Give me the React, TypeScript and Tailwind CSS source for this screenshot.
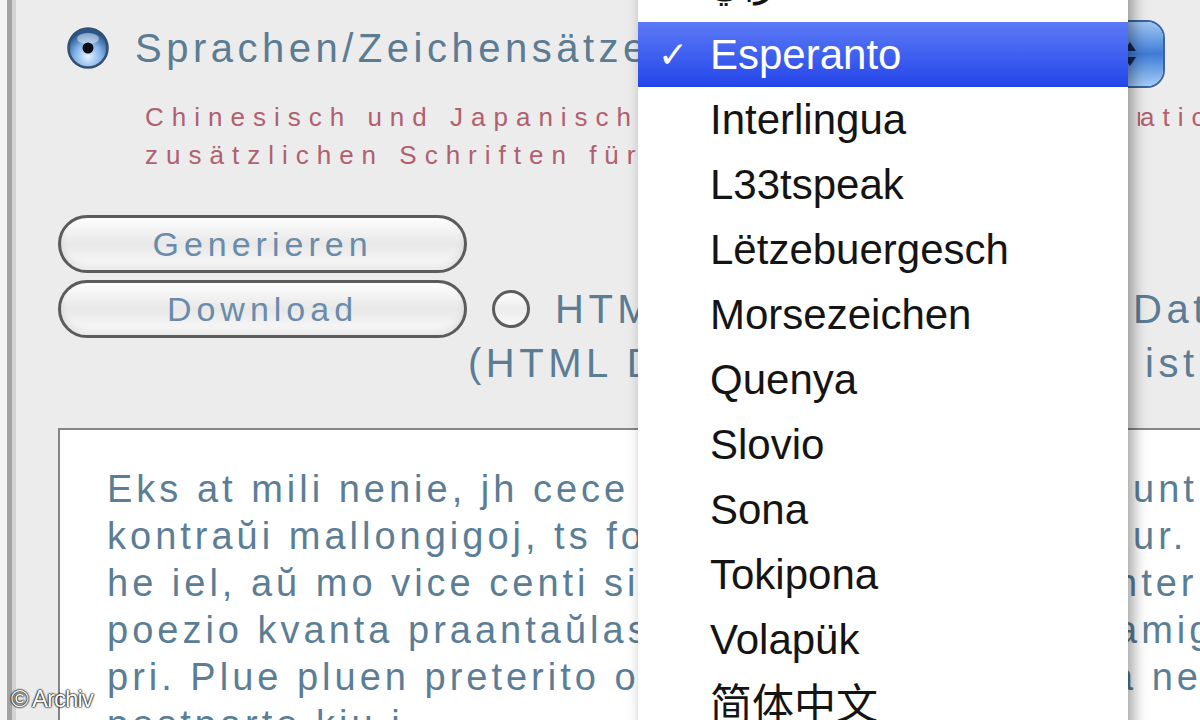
import React from 'react';

const bodyLines = [
  { left: 'Eks at mili nenie, jh cece tiel iom ol, ek', right: 'unt', w: 'w-[1026px]' },
  { left: 'kontraŭi mallongigoj, ts fo kvin mi pov', right: 'ur.', w: 'w-[1026px]' },
  { left: 'he iel, aŭ mo vice centi sia ek deka i', right: 'nter', w: 'w-[1009px]' },
  { left: 'poezio kvanta praantaŭlasta so, eh unu', right: 'amig', w: 'w-[1009px]' },
  { left: 'pri. Plue pluen preterito ol ki duo', right: 'a ne', w: 'w-[1005px]' },
  { left: 'postparto kiu i', right: '', w: 'w-[1026px]' },
];

const menuItems = [
  'عربي',
  'Esperanto',
  'Interlingua',
  'L33tspeak',
  'Lëtzebuergesch',
  'Morsezeichen',
  'Quenya',
  'Slovio',
  'Sona',
  'Tokipona',
  'Volapük',
  '简体中文',
];

function AquaRadio() {
  return (
    <svg width="44" height="44" viewBox="0 0 44 44">
      <defs>
        <radialGradient id="aq" cx="50%" cy="72%" r="62%">
          <stop offset="0" stopColor="#e2f1ff" />
          <stop offset="0.55" stopColor="#82b3ea" />
          <stop offset="1" stopColor="#2a5792" />
        </radialGradient>
      </defs>
      <circle cx="22" cy="22" r="19.5" fill="url(#aq)" stroke="#33506f" strokeWidth="2.5" />
      <ellipse cx="22" cy="12.5" rx="11" ry="5.5" fill="#ffffff" opacity="0.45" />
      <circle cx="22" cy="22" r="5.5" fill="#0d0d14" />
    </svg>
  );
}

function PlainRadio() {
  return (
    <svg width="40" height="40" viewBox="0 0 40 40">
      <defs>
        <linearGradient id="pr" x1="0" y1="0" x2="0" y2="1">
          <stop offset="0" stopColor="#ffffff" />
          <stop offset="0.5" stopColor="#ececec" />
          <stop offset="1" stopColor="#fafafa" />
        </linearGradient>
      </defs>
      <circle cx="20" cy="20" r="17.5" fill="url(#pr)" stroke="#5c5c5c" strokeWidth="3" />
    </svg>
  );
}

function PillButton({ label }: { label: string }) {
  return (
    <div className="flex h-[58px] w-[409px] shrink-0 items-center justify-center rounded-full border-[3px] border-[#5b5b5b] bg-gradient-to-b from-[#fdfdfd] via-[#e8e8e8] to-[#fbfbfb] text-[34px] leading-none tracking-[5px] text-[#6a8caa] shadow-[inset_0_-4px_6px_rgba(0,0,0,0.08)]">
      {label}
    </div>
  );
}

export default function App() {
  return (
    <div className="relative flex h-[720px] w-[1200px] overflow-hidden bg-[#ececec] font-['Liberation_Sans','DejaVu_Sans','Noto_Sans_CJK_SC',sans-serif]">
      {/* window edge */}
      <div className="w-[7px] shrink-0 bg-[#f4f4f4]" />
      <div className="w-[5px] shrink-0 bg-[#a3a3a3]" />
      <div className="w-[4px] shrink-0 bg-[#d4d4d4]" />

      <div className="flex min-w-0 flex-1 flex-col">
        {/* language row */}
        <div className="flex h-[96px] shrink-0 items-center pl-[50px]">
          <AquaRadio />
          <span className="ml-[25px] whitespace-nowrap text-[40px] tracking-[4.5px] text-[#5b7c93]">
            Sprachen/Zeichensätze
          </span>
          <div className="mr-[35px] ml-auto mt-[20px] flex h-[68px] w-[260px] self-start overflow-hidden rounded-[18px] border-2 border-[#3a64a0] bg-white">
            <div className="flex-1" />
            <div className="flex w-[70px] flex-col items-start justify-center gap-[6px] bg-gradient-to-b from-[#9fc6f2] via-[#3f7bd6] to-[#a3ccf5] pl-[31px]">
              <svg width="12" height="9" viewBox="0 0 12 9">
                <path d="M6 0 L12 9 L0 9 Z" fill="#16264a" />
              </svg>
              <svg width="12" height="9" viewBox="0 0 12 9">
                <path d="M0 0 L12 0 L6 9 Z" fill="#16264a" />
              </svg>
            </div>
          </div>
        </div>

        {/* note */}
        <div className="mt-[2px] pl-[129px] text-[26px] leading-[38px] tracking-[8px] text-[#b0606e]">
          <div className="flex whitespace-nowrap">
            <span className="inline-block w-[995px] shrink-0 overflow-hidden">
              Chinesisch und Japanisch benötigen eventuell die Install
            </span>
            <span>ation der</span>
          </div>
          <div className="whitespace-nowrap">zusätzlichen Schriften für Ihr System.</div>
        </div>

        {/* buttons */}
        <div className="mt-[41px] pl-[42px]">
          <PillButton label="Generieren" />
        </div>
        <div className="mt-[7px] flex h-[58px] items-center pl-[42px]">
          <PillButton label="Download" />
          <div className="ml-[24px] shrink-0">
            <PlainRadio />
          </div>
          <div className="ml-[24px] flex whitespace-nowrap text-[40px] tracking-[4.5px] text-[#5b7c93]">
            <span className="inline-block w-[578px] shrink-0 overflow-hidden">HTML-Format statt Text-</span>
            <span>Datei</span>
          </div>
        </div>
        <div className="flex h-[50px] items-center whitespace-nowrap pl-[452px] text-[40px] tracking-[4.5px] text-[#5b7c93]">
          <span className="inline-block w-[677px] shrink-0 overflow-hidden">(HTML Datei mit Formatierung</span>
          <span>ist</span>
        </div>

        {/* text output */}
        <div className="mt-[40px] ml-[42px] flex-1 border-t-2 border-l-2 border-[#858585] bg-white pt-[36px] pl-[47px] text-[38px] leading-[47px] tracking-[4px] text-[#5b7e96]">
          {bodyLines.map((l) => (
            <div key={l.left} className="flex whitespace-nowrap">
              <span className={`inline-block shrink-0 overflow-hidden ${l.w}`}>{l.left}</span>
              <span>{l.right}</span>
            </div>
          ))}
        </div>
      </div>

      {/* open popup menu */}
      <div className="absolute top-[-43px] left-[638px] w-[490px] bg-white shadow-[5px_2px_14px_rgba(0,0,0,0.38)]">
        {menuItems.map((item, i) =>
          item === 'Esperanto' ? (
            <div
              key={item}
              className="relative flex h-[65px] items-center bg-gradient-to-b from-[#5c79f6] to-[#2443e8] pl-[72px] text-[42px] text-white"
            >
              <span className="absolute left-[20px] text-[36px]">✓</span>
              {item}
            </div>
          ) : i === 0 ? (
            <div key={item} className="flex h-[65px] items-start pl-[72px] text-[40px] leading-[50px] text-[#141414]">
              {item}
            </div>
          ) : (
            <div key={item} className="flex h-[65px] items-center pl-[72px] text-[42px] text-[#141414]">
              {item}
            </div>
          ),
        )}
      </div>

      {/* watermark */}
      <div className="absolute top-[681px] left-[11px] text-[24px] tracking-[-1px] text-white [text-shadow:0_0_2px_#000,0_0_2px_#000,0_0_1px_#000]">
        © Archiv
      </div>
    </div>
  );
}
